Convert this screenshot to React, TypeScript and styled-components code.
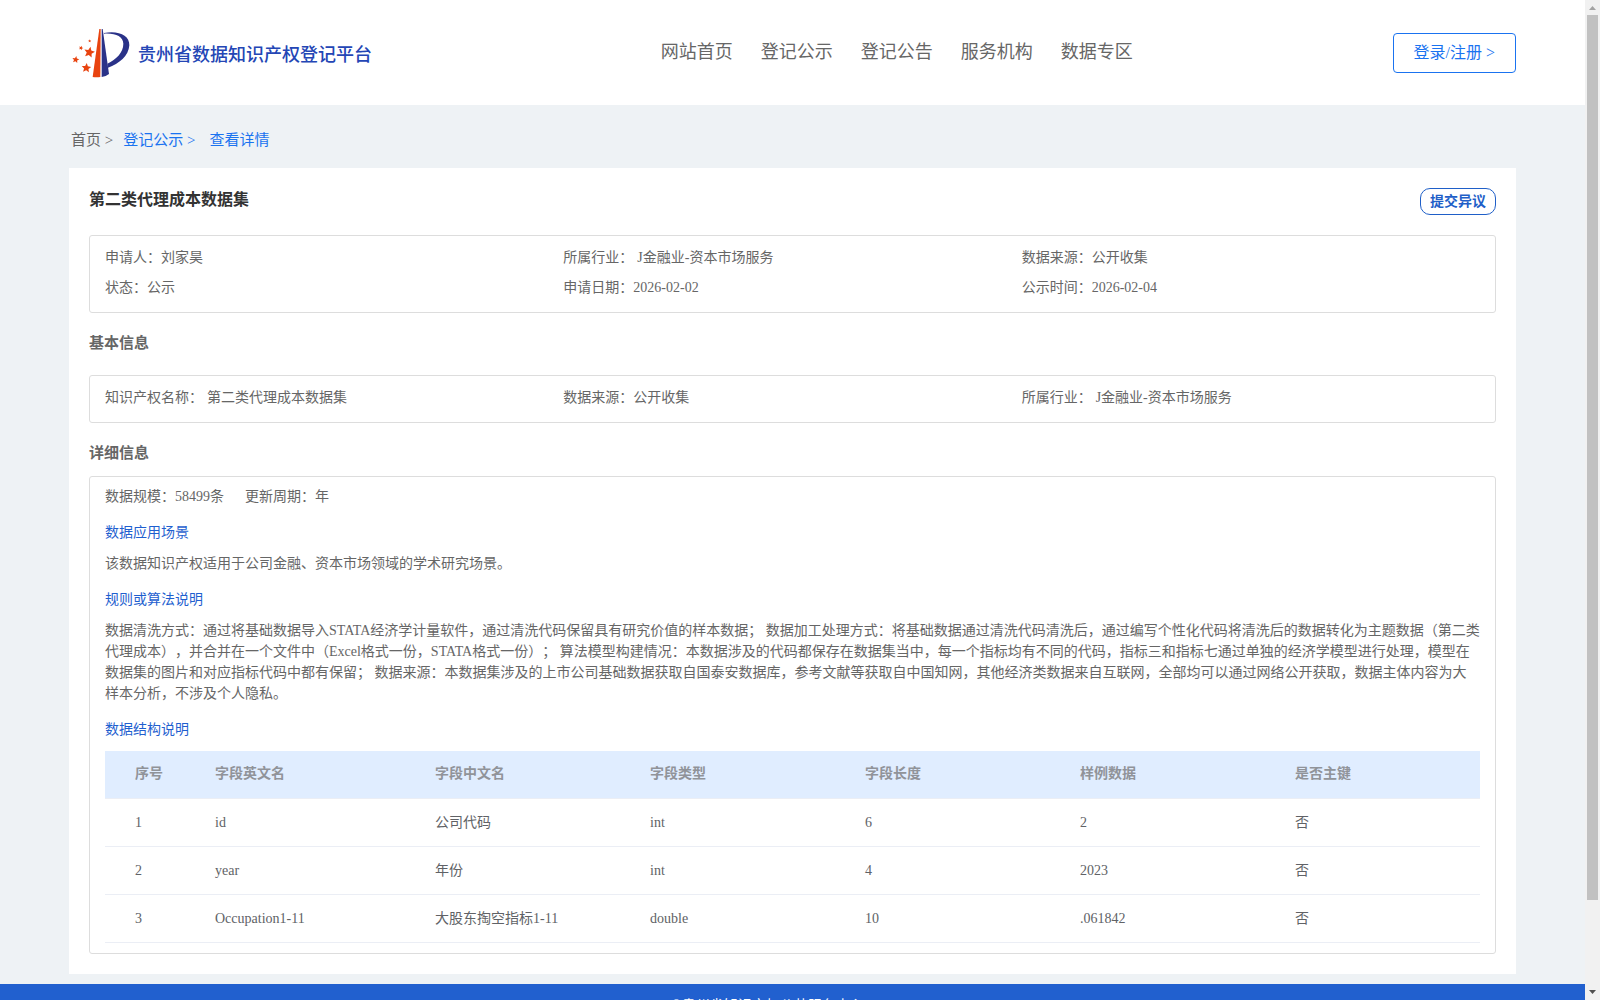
import React from "react";
import styled, { createGlobalStyle } from "styled-components";

const GlobalStyle = createGlobalStyle`
  * { box-sizing: border-box; }
  body {
    margin: 0;
    background: #eef2f5;
    color: #666;
    font: 14px/21px "Liberation Serif", "Noto Sans CJK SC", sans-serif;
    text-spacing-trim: space-all;
  }
  h1, h2, h3, p, dl, dd, ol { margin: 0; padding: 0; }
  button { font-family: inherit; background: #fff; cursor: pointer; }
  a { color: inherit; text-decoration: none; }
`;

const Viewport = styled.div`
  display: flex;
  height: 100vh;
  overflow: hidden;
`;

const Page = styled.div`
  flex: 1;
  min-width: 0;
`;

const Header = styled.header`
  display: flex;
  justify-content: space-between;
  align-items: center;
  height: 105px;
  padding: 0 69px;
  background: #fff;
`;

const Brand = styled.a`
  display: flex;
  align-items: center;
  gap: 6px;
  min-width: 332px;
  padding-left: 3px;
  color: #2446b5;
  font-size: 18px;
  line-height: 24px;
  font-weight: 500;
  white-space: nowrap;
`;

const BrandName = styled.span`
  padding-top: 4px;
`;

const Nav = styled.nav`
  display: flex;
  gap: 28px;
  padding-bottom: 2px;
  font-size: 18px;
  line-height: 24px;
  white-space: nowrap;
`;

const LoginButton = styled.button`
  height: 40px;
  padding: 0 20px;
  border: 1px solid #1a73f0;
  border-radius: 4px;
  color: #1a73f0;
  font-size: 16px;
  line-height: 24px;
`;

const Main = styled.main`
  padding: 0 69px 10px;
`;

const Crumbs = styled.nav`
  display: flex;
  align-items: center;
  height: 63px;
  padding: 8px 2px 0;
  gap: 10px;
  font-size: 15px;
`;

const Crumb = styled.a<{ $active?: boolean }>`
  color: ${(p) => (p.$active ? "#1a73f0" : "#666")};
  &:last-child { padding-left: 4px; }
`;

const Panel = styled.section`
  padding: 20px;
  background: #fff;
`;

const PanelHead = styled.div`
  display: flex;
  justify-content: space-between;
  height: 47px;
`;

const Title = styled.h1`
  color: #333;
  font-size: 16px;
  line-height: 24px;
  font-weight: 700;
`;

const ObjectionButton = styled.button`
  height: 27px;
  padding: 0 9px;
  border: 1px solid #1f5fc8;
  border-radius: 10px;
  color: #1f5fc8;
  font-size: 14px;
  line-height: 21px;
  font-weight: 700;
`;

const InfoBox = styled.dl`
  display: grid;
  grid-template-columns: repeat(3, 1fr);
  padding: 7px 15px 9px;
  border: 1px solid #ddd;
  border-radius: 3px;
`;

const InfoItem = styled.div`
  display: flex;
  line-height: 30px;
`;

const Value = styled.dd<{ $spaced?: boolean }>`
  padding-left: ${(p) => (p.$spaced ? "4px" : "0")};
`;

const SectionTitle = styled.h2<{ $compact?: boolean }>`
  padding: ${(p) => (p.$compact ? "20px 0 12px" : "20px 0 21px")};
  font-size: 15px;
  line-height: 21px;
  font-weight: 700;
`;

const DetailBox = styled.div`
  padding: 9px 15px 10px;
  border: 1px solid #ddd;
  border-radius: 3px;
`;

const Summary = styled.p`
  display: flex;
  gap: 21px;
`;

const SubTitle = styled.h3`
  padding: 15px 0 10px;
  color: #1f5fcf;
  font-size: 14px;
  line-height: 21px;
  font-weight: 400;
`;

const Table = styled.table`
  width: 100%;
  margin-top: 1px;
  table-layout: fixed;
  border-collapse: separate;
  border-spacing: 0;
  text-align: left;
`;

const Col = styled.col<{ $width?: number }>`
  width: ${(p) => (p.$width ? `${p.$width}px` : "auto")};
`;

const HeadCell = styled.th`
  height: 48px;
  padding: 0 10px 2px;
  border-bottom: 1px solid #ebeef5;
  background: #e0edff;
  color: #909399;
  font-weight: 700;
  &:first-child { padding-left: 30px; }
`;

const Cell = styled.td`
  height: 48px;
  padding: 0 10px;
  border-bottom: 1px solid #ebeef5;
  color: #606266;
  &:first-child { padding-left: 30px; }
`;

const Footer = styled.footer`
  padding: 11px 0;
  background: #2160cf;
  color: #fff;
  text-align: center;
`;

const ScrollRail = styled.div`
  display: flex;
  flex-direction: column;
  width: 15px;
  padding: 0 2px;
  background: #f1f1f1;
`;

const ScrollArrow = styled.svg`
  display: block;
  width: 11px;
  height: 15px;
`;

const ScrollThumb = styled.div`
  flex: 885;
  background: #c1c1c1;
`;

const ScrollRest = styled.div`
  flex: 85;
`;

const star = (cx: number, cy: number, r: number, turn: number) =>
  Array.from({ length: 10 }, (_, i) => {
    const radius = i % 2 ? r * 0.46 : r;
    const angle = ((i * 36 - 90 + turn) * Math.PI) / 180;
    return `${cx + radius * Math.cos(angle)},${cy + radius * Math.sin(angle)}`;
  }).join(" ");

const Logo = () => (
  <svg width="60" height="50" viewBox="36 54 180 150" aria-hidden="true">
    <g fill="#e8430f">
      <path d="M118 57h4l-1 144q-12 2-23 0z" />
      <polygon points={star(47, 149, 11, 10)} />
      <polygon points={star(63, 114, 7, 20)} />
      <polygon points={star(89, 93, 5, 0)} />
      <polygon points={star(88, 127, 17, 12)} />
      <polygon points={star(79, 174, 15, 5)} />
    </g>
    <g fill="#2a3288">
      <path d="M125 57h3l19 135q-9 7-22 9z" />
      <path d="M132 69C176 61 209 76 208 106C206 138 178 161 144 173L142 161C169 148 190 127 190 101C189 79 167 69 132 71Z" />
    </g>
  </svg>
);

const navItems = ["网站首页", "登记公示", "登记公告", "服务机构", "数据专区"];

type Info = { label: string; value: string; spaced?: boolean };

const overview: Info[] = [
  { label: "申请人：", value: "刘家昊" },
  { label: "所属行业：", value: "J金融业-资本市场服务", spaced: true },
  { label: "数据来源：", value: "公开收集" },
  { label: "状态：", value: "公示" },
  { label: "申请日期：", value: "2026-02-02" },
  { label: "公示时间：", value: "2026-02-04" },
];

const basics: Info[] = [
  { label: "知识产权名称：", value: "第二类代理成本数据集", spaced: true },
  { label: "数据来源：", value: "公开收集" },
  { label: "所属行业：", value: "J金融业-资本市场服务", spaced: true },
];

const columns = [
  { name: "序号", width: 100 },
  { name: "字段英文名", width: 220 },
  { name: "字段中文名", width: 215 },
  { name: "字段类型", width: 215 },
  { name: "字段长度", width: 215 },
  { name: "样例数据", width: 215 },
  { name: "是否主键" },
];

const rows = [
  ["1", "id", "公司代码", "int", "6", "2", "否"],
  ["2", "year", "年份", "int", "4", "2023", "否"],
  ["3", "Occupation1-11", "大股东掏空指标1-11", "double", "10", ".061842", "否"],
];

const InfoList = ({ items }: { items: Info[] }) => (
  <InfoBox>
    {items.map((item) => (
      <InfoItem key={item.label}>
        <dt>{item.label}</dt>
        <Value $spaced={item.spaced}>{item.value}</Value>
      </InfoItem>
    ))}
  </InfoBox>
);

export default function App() {
  return (
    <Viewport lang="zh-CN">
      <GlobalStyle />
      <Page>
        <Header>
          <Brand href="#">
            <Logo />
            <BrandName>贵州省数据知识产权登记平台</BrandName>
          </Brand>
          <Nav>
            {navItems.map((item) => (
              <a href="#" key={item}>{item}</a>
            ))}
          </Nav>
          <LoginButton type="button">登录/注册 &gt;</LoginButton>
        </Header>
        <Main>
          <Crumbs>
            <Crumb href="#">首页 &gt;</Crumb>
            <Crumb href="#" $active>登记公示 &gt;</Crumb>
            <Crumb href="#" $active>查看详情</Crumb>
          </Crumbs>
          <Panel>
            <PanelHead>
              <Title>第二类代理成本数据集</Title>
              <ObjectionButton type="button">提交异议</ObjectionButton>
            </PanelHead>
            <InfoList items={overview} />
            <SectionTitle>基本信息</SectionTitle>
            <InfoList items={basics} />
            <SectionTitle $compact>详细信息</SectionTitle>
            <DetailBox>
              <Summary>
                <span>数据规模：58499条</span>
                <span>更新周期：年</span>
              </Summary>
              <SubTitle>数据应用场景</SubTitle>
              <p>该数据知识产权适用于公司金融、资本市场领域的学术研究场景。</p>
              <SubTitle>规则或算法说明</SubTitle>
              <p>
                数据清洗方式：通过将基础数据导入STATA经济学计量软件，通过清洗代码保留具有研究价值的样本数据； 数据加工处理方式：将基础数据通过清洗代码清洗后，通过编写个性化代码将清洗后的数据转化为主题数据（第二类代理成本），并合并在一个文件中（Excel格式一份，STATA格式一份）； 算法模型构建情况：本数据涉及的代码都保存在数据集当中，每一个指标均有不同的代码，指标三和指标七通过单独的经济学模型进行处理，模型在数据集的图片和对应指标代码中都有保留； 数据来源：本数据集涉及的上市公司基础数据获取自国泰安数据库，参考文献等获取自中国知网，其他经济类数据来自互联网，全部均可以通过网络公开获取，数据主体内容为大样本分析，不涉及个人隐私。
              </p>
              <SubTitle>数据结构说明</SubTitle>
              <Table>
                <colgroup>
                  {columns.map((c) => (
                    <Col key={c.name} $width={c.width} />
                  ))}
                </colgroup>
                <thead>
                  <tr>
                    {columns.map((c) => (
                      <HeadCell scope="col" key={c.name}>{c.name}</HeadCell>
                    ))}
                  </tr>
                </thead>
                <tbody>
                  {rows.map((row) => (
                    <tr key={row[0]}>
                      {row.map((value, i) => (
                        <Cell key={columns[i].name}>{value}</Cell>
                      ))}
                    </tr>
                  ))}
                </tbody>
              </Table>
            </DetailBox>
          </Panel>
        </Main>
        <Footer>copyright©贵州省知识产权公共服务中心 all rights reserved</Footer>
      </Page>
      <ScrollRail aria-hidden="true">
        <ScrollArrow viewBox="0 0 11 15"><path d="M2 10h7L5.500 6z" fill="#a3a3a3" /></ScrollArrow>
        <ScrollThumb />
        <ScrollRest />
        <ScrollArrow viewBox="0 0 11 15"><path d="M2 5h7L5.500 9z" fill="#505050" /></ScrollArrow>
      </ScrollRail>
    </Viewport>
  );
}
